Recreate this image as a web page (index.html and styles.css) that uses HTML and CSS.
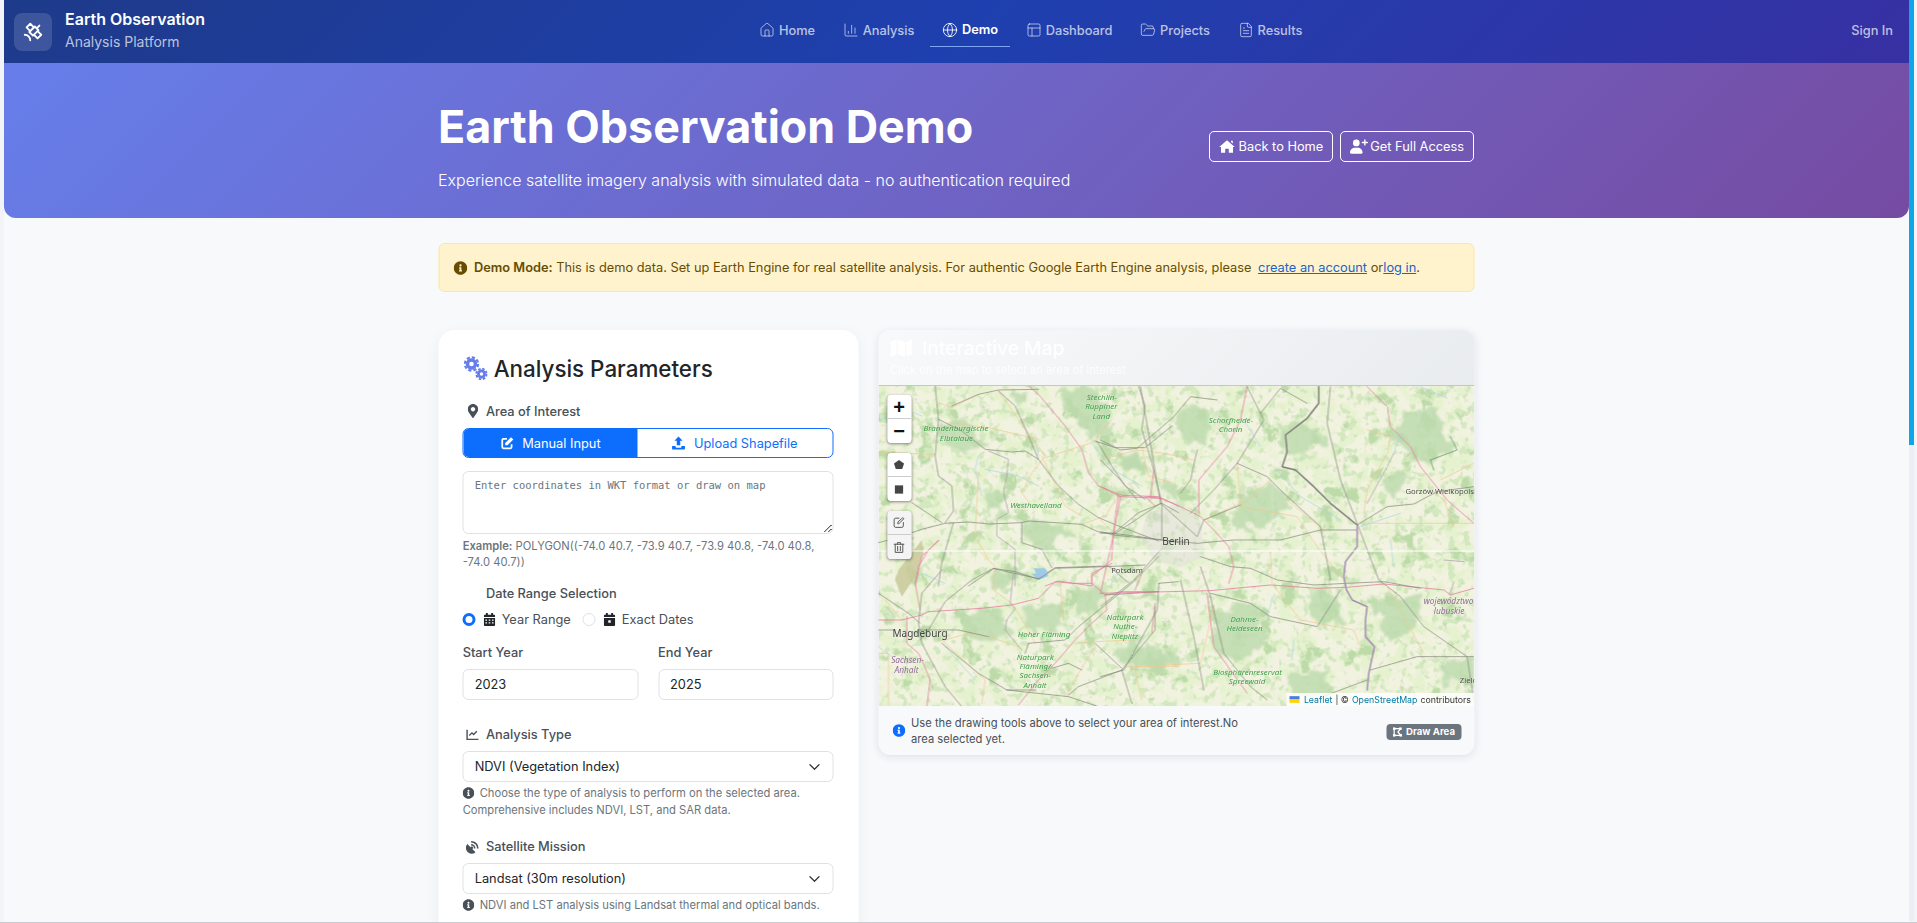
FILE: index.html
```html
<!DOCTYPE html>
<html lang="en">
<head>
<meta charset="utf-8">
<title>Earth Observation Demo</title>
<link rel="stylesheet" href="styles.css">
</head>
<body>
<svg class="defs" xmlns="http://www.w3.org/2000/svg">
  <symbol id="i-info" viewBox="0 0 512 512"><path fill="currentColor" d="M256 8C119 8 8 119.1 8 256c0 137 111 248 248 248s248-111 248-248C504 119.1 393 8 256 8zm0 110c23.2 0 42 18.8 42 42s-18.8 42-42 42-42-18.8-42-42 18.8-42 42-42zm56 254c0 6.6-5.4 12-12 12h-88c-6.6 0-12-5.4-12-12v-24c0-6.6 5.4-12 12-12h12v-64h-12c-6.6 0-12-5.4-12-12v-24c0-6.6 5.4-12 12-12h64c6.6 0 12 5.4 12 12v100h12c6.6 0 12 5.4 12 12v24z"/></symbol>
  <symbol id="i-pin" viewBox="0 0 384 512"><path fill="currentColor" d="M172.268 501.67C26.97 291.031 0 269.413 0 192 0 85.961 85.961 0 192 0s192 85.961 192 192c0 77.413-26.97 99.031-172.268 309.67-9.535 13.774-29.93 13.773-39.464 0zM192 272c44.183 0 80-35.817 80-80s-35.817-80-80-80-80 35.817-80 80 35.817 80 80 80z"/></symbol>
  <symbol id="i-home" viewBox="0 0 576 512"><path fill="currentColor" d="M288 32 568 272h-64v208H352V336H224v144H72V272H8zM432 48h64v100l-64-54z"/></symbol>
  <symbol id="i-userplus" viewBox="0 0 640 512"><circle fill="currentColor" cx="224" cy="128" r="120"/><path fill="currentColor" d="M40 512c-22 0-40-18-40-40 0-90 70-176 160-176h128c90 0 160 86 160 176 0 22-18 40-40 40zM504 200V136h-64a24 24 0 0 1 0-48h64V24a24 24 0 0 1 48 0v64h64a24 24 0 0 1 0 48h-64v64a24 24 0 0 1-48 0z"/></symbol>
  <symbol id="i-edit" viewBox="0 0 24 24"><path fill="none" stroke="currentColor" stroke-width="3" d="M19 14v5a2 2 0 0 1-2 2H5a2 2 0 0 1-2-2V7a2 2 0 0 1 2-2h6"/><path fill="currentColor" d="M8 16v-4L18 2l4 4-10 10z"/></symbol>
  <symbol id="i-upload" viewBox="0 0 24 24"><path fill="currentColor" d="M12 1l7 7h-4v8H9V8H5zM1 17h6v1.500a1.500 1.500 0 0 0 1.500 1.500h7a1.500 1.500 0 0 0 1.500-1.500V17h6v5a1 1 0 0 1-1 1H2a1 1 0 0 1-1-1z"/></symbol>
  <symbol id="i-cal" viewBox="0 0 448 512"><path fill="currentColor" d="M96 0h48a16 16 0 0 1 16 16v48h128V16a16 16 0 0 1 16-16h48a16 16 0 0 1 16 16v48h32a48 48 0 0 1 48 48v48H0v-48a48 48 0 0 1 48-48h32V16A16 16 0 0 1 96 0zM0 192h448v272a48 48 0 0 1-48 48H48a48 48 0 0 1-48-48zm64 64v48h64v-48zm128 0v48h64v-48zm128 0v48h64v-48zM64 368v48h64v-48zm128 0v48h64v-48zm128 0v48h64v-48z" fill-rule="evenodd"/></symbol>
  <symbol id="i-cal2" viewBox="0 0 448 512"><path fill="currentColor" fill-rule="evenodd" d="M96 0h48a16 16 0 0 1 16 16v48h128V16a16 16 0 0 1 16-16h48a16 16 0 0 1 16 16v48h32a48 48 0 0 1 48 48v48H0v-48a48 48 0 0 1 48-48h32V16A16 16 0 0 1 96 0zM0 192h448v272a48 48 0 0 1-48 48H48a48 48 0 0 1-48-48zm176 96v96h96v-96z"/></symbol>
  <symbol id="i-chart" viewBox="0 0 24 24"><path fill="none" stroke="currentColor" stroke-width="2.600" d="M2 3v18h21"/><path fill="none" stroke="currentColor" stroke-width="2.600" d="M6 14l5-5 3 3 6-6"/></symbol>
  <symbol id="i-dish" viewBox="0 0 24 24"><path fill="currentColor" d="M3 8 16 21a9.200 9.200 0 0 1-13-13zM9 3a12 12 0 0 1 12 12h-2.500A9.500 9.500 0 0 0 9 5.500zM9 8a7 7 0 0 1 7 7h-2.500A4.500 4.500 0 0 0 9 10.500z"/><circle fill="currentColor" cx="10" cy="14" r="2.200"/></symbol>
  <symbol id="i-draw" viewBox="0 0 24 24"><path fill="none" stroke="currentColor" stroke-width="3" d="M4 4h15l-6 8 7 8H4z"/><rect fill="currentColor" x="1" y="1" width="6" height="6"/><rect fill="currentColor" x="1" y="17" width="6" height="6"/><rect fill="currentColor" x="16" y="1" width="6" height="6"/><rect fill="currentColor" x="17" y="17" width="6" height="6"/></symbol>
  <symbol id="i-map" viewBox="0 0 576 512"><path fill="currentColor" d="M0 117v351c0 11 12 19 22 15l138-63V32L20 88C8 93 0 104 0 117zm192 303 192 64V96L192 32zM554 33 416 96v384l140-56c12-5 20-16 20-29V48c0-11-12-19-22-15z"/></symbol>
  <symbol id="l-house" viewBox="0 0 24 24"><path d="M15 21v-8a1 1 0 0 0-1-1h-4a1 1 0 0 0-1 1v8"/><path d="M3 10a2 2 0 0 1 .709-1.528l7-5.999a2 2 0 0 1 2.582 0l7 5.999A2 2 0 0 1 21 10v9a2 2 0 0 1-2 2H5a2 2 0 0 1-2-2z"/></symbol>
  <symbol id="l-chart" viewBox="0 0 24 24"><path d="M3 3v16a2 2 0 0 0 2 2h16"/><path d="M18 17V9"/><path d="M13 17V5"/><path d="M8 17v-3"/></symbol>
  <symbol id="l-globe" viewBox="0 0 24 24"><circle cx="12" cy="12" r="10"/><path d="M12 2a14.500 14.500 0 0 0 0 20 14.500 14.500 0 0 0 0-20"/><path d="M2 12h20"/></symbol>
  <symbol id="l-layout" viewBox="0 0 24 24"><rect x="3" y="3" width="18" height="18" rx="2"/><path d="M3 9h18"/><path d="M9 21V9"/></symbol>
  <symbol id="l-folder" viewBox="0 0 24 24"><path d="m6 14 1.500-2.900A2 2 0 0 1 9.240 10H20a2 2 0 0 1 1.940 2.500l-1.540 6a2 2 0 0 1-1.950 1.500H4a2 2 0 0 1-2-2V5a2 2 0 0 1 2-2h3.900a2 2 0 0 1 1.690.9l.81 1.200a2 2 0 0 0 1.670.9H18a2 2 0 0 1 2 2v2"/></symbol>
  <symbol id="l-file" viewBox="0 0 24 24"><path d="M15 2H6a2 2 0 0 0-2 2v16a2 2 0 0 0 2 2h12a2 2 0 0 0 2-2V7Z"/><path d="M14 2v4a2 2 0 0 0 2 2h4"/><path d="M10 9H8"/><path d="M16 13H8"/><path d="M16 17H8"/></symbol>
  <symbol id="l-sat" viewBox="0 0 24 24"><path d="M13 7 9 3 5 7l4 4"/><path d="m17 11 4 4-4 4-4-4"/><path d="m8 12 4 4 6-6-4-4Z"/><path d="m16 8 3-3"/><path d="M9 21a6 6 0 0 0-6-6"/></symbol>
</svg>

<div class="shell">
  <div class="page">
    <nav class="topnav">
      <a class="brand">
        <span class="logo"><svg class="lucide logo-icon"><use href="#l-sat"/></svg></span>
        <span class="brand-text"><strong>Earth Observation</strong><small>Analysis Platform</small></span>
      </a>
      <div class="navlinks">
        <a class="navlink"><svg class="lucide"><use href="#l-house"/></svg>Home</a>
        <a class="navlink"><svg class="lucide"><use href="#l-chart"/></svg>Analysis</a>
        <a class="navlink active"><svg class="lucide"><use href="#l-globe"/></svg>Demo</a>
        <a class="navlink"><svg class="lucide"><use href="#l-layout"/></svg>Dashboard</a>
        <a class="navlink"><svg class="lucide"><use href="#l-folder"/></svg>Projects</a>
        <a class="navlink"><svg class="lucide"><use href="#l-file"/></svg>Results</a>
      </div>
      <a class="signin">Sign In</a>
    </nav>

    <header class="hero">
      <div class="hero-inner">
        <div class="hero-text">
          <h1>Earth Observation Demo</h1>
          <p>Experience satellite imagery analysis with simulated data - no authentication required</p>
        </div>
        <div class="hero-actions">
          <a class="hero-btn"><svg class="fa home-ic"><use href="#i-home"/></svg>Back to Home</a>
          <a class="hero-btn"><svg class="fa user-ic"><use href="#i-userplus"/></svg>Get Full Access</a>
        </div>
      </div>
    </header>

    <main class="content">
      <div class="alert">
        <svg class="fa alert-ic"><use href="#i-info"/></svg>
        <span class="alert-text"><strong>Demo Mode:</strong> This is demo data. Set up Earth Engine for real satellite analysis. For authentic Google Earth Engine analysis, please <a class="link first">create an account</a> or<a class="link">log in</a>.</span>
      </div>

      <div class="columns">
        <section class="card">
          <h3 class="card-title">
            <svg class="gears" viewBox="0 0 24 24">
              <circle class="gear-teeth" cx="8" cy="8" r="6.600"/><circle class="gear-body" cx="8" cy="8" r="4"/>
              <circle class="gear-teeth small" cx="18" cy="18" r="5.200"/><circle class="gear-body small" cx="18" cy="18" r="3.100"/>
            </svg>
            Analysis Parameters
          </h3>

          <label class="lbl area"><span class="lbl-ic"><svg class="fa pin"><use href="#i-pin"/></svg></span>Area of Interest</label>
          <div class="tabs">
            <a class="tab on"><svg class="fa tab-ic"><use href="#i-edit"/></svg>Manual Input</a>
            <a class="tab"><svg class="fa tab-ic"><use href="#i-upload"/></svg>Upload Shapefile</a>
          </div>
          <textarea class="wkt" placeholder="Enter coordinates in WKT format or draw on map"></textarea>
          <p class="example"><strong>Example:</strong> POLYGON((-74.0 40.7, -73.9 40.7, -73.9 40.8, -74.0 40.8, -74.0 40.7))</p>

          <label class="lbl date"><span class="lbl-ic"></span>Date Range Selection</label>
          <div class="radios">
            <label class="radio"><input type="radio" name="range" checked><svg class="fa cal"><use href="#i-cal"/></svg>Year Range</label>
            <label class="radio"><input type="radio" name="range"><svg class="fa cal"><use href="#i-cal2"/></svg>Exact Dates</label>
          </div>
          <div class="years">
            <div><label class="lbl">Start Year</label><input class="field" value="2023"></div>
            <div><label class="lbl">End Year</label><input class="field" value="2025"></div>
          </div>

          <label class="lbl type"><span class="lbl-ic"><svg class="fa chart"><use href="#i-chart"/></svg></span>Analysis Type</label>
          <div class="field select">NDVI (Vegetation Index)<svg class="chev" viewBox="0 0 16 16"><path d="m2 5 6 6 6-6"/></svg></div>
          <p class="help"><svg class="fa help-ic"><use href="#i-info"/></svg>Choose the type of analysis to perform on the selected area. Comprehensive includes NDVI, LST, and SAR data.</p>

          <label class="lbl mission"><span class="lbl-ic"><svg class="fa dish"><use href="#i-dish"/></svg></span>Satellite Mission</label>
          <div class="field select">Landsat (30m resolution)<svg class="chev" viewBox="0 0 16 16"><path d="m2 5 6 6 6-6"/></svg></div>
          <p class="help"><svg class="fa help-ic"><use href="#i-info"/></svg>NDVI and LST analysis using Landsat thermal and optical bands.</p>
        </section>

        <section class="mapcard">
          <div class="map-head">
            <h4><svg class="fa map-ic"><use href="#i-map"/></svg>Interactive Map</h4>
            <p>Click on the map to select an area of interest</p>
          </div>
          <div class="map">
            <svg class="tiles" viewBox="0 0 596 320" preserveAspectRatio="none">
              <defs>
                <filter id="meadow" x="0" y="0" width="100%" height="100%" color-interpolation-filters="sRGB">
                  <feTurbulence type="fractalNoise" baseFrequency="0.06" numOctaves="3" seed="11"/>
                  <feColorMatrix values="0 0 0 0 .90  0 0 0 0 .95  0 0 0 0 .81  6 0 0 0 -2.800"/>
                </filter>
                <filter id="forest" x="0" y="0" width="100%" height="100%" color-interpolation-filters="sRGB">
                  <feTurbulence type="fractalNoise" baseFrequency="0.05" numOctaves="4" seed="5"/>
                  <feColorMatrix values="0 0 0 0 .74  0 0 0 0 .86  0 0 0 0 .66  0 8 0 0 -4.750"/>
                  <feGaussianBlur stdDeviation="0.5"/>
                </filter>
                <filter id="fine" x="0" y="0" width="100%" height="100%" color-interpolation-filters="sRGB">
                  <feTurbulence type="fractalNoise" baseFrequency="0.13" numOctaves="2" seed="23"/>
                  <feColorMatrix values="0 0 0 0 .83  0 0 0 0 .91  0 0 0 0 .75  0 0 8 0 -4.500"/>
                  <feGaussianBlur stdDeviation="0.4"/>
                </filter>
                <filter id="soft" x="0" y="0" width="100%" height="100%"><feGaussianBlur stdDeviation="0.25"/></filter>
                <filter id="softer" x="0" y="0" width="100%" height="100%" color-interpolation-filters="sRGB">
                  <feTurbulence type="fractalNoise" baseFrequency="0.07" numOctaves="3" seed="3" result="n"/>
                  <feDisplacementMap in="SourceGraphic" in2="n" scale="22" xChannelSelector="R" yChannelSelector="G"/>
                  <feGaussianBlur stdDeviation="0.9"/>
                </filter>
              </defs>
              <rect class="land" width="596" height="320"/>
              <rect filter="url(#meadow)" width="596" height="320"/>
              <rect filter="url(#forest)" width="596" height="320"/>
              <rect filter="url(#fine)" width="596" height="320"/>

              <g filter="url(#softer)">
                <g class="woods" transform="scale(.3333)">
                  <path d="M200 110 260 100 330 180 230 200 180 140Z"/>
                  <path d="M320 310 370 310 390 390 330 380Z"/>
                  <path d="M430 410 530 410 590 450 500 480 440 470Z"/>
                  <path d="M540 20 600 0 700 60 700 150 640 150 580 90Z"/>
                  <path d="M720 200 780 190 790 250 730 250Z"/>
                  <path d="M400 20 450 25 440 60 405 55Z"/>
                  <path d="M840 290 900 295 900 340 850 330Z"/>
                </g>
                <g class="woods" transform="translate(0 154) scale(.3333)">
                  <path d="M230 220 340 210 420 270 370 300 270 280Z"/>
                  <path d="M430 200 540 190 560 260 470 280Z"/>
                  <path d="M580 140 660 150 670 200 590 230Z"/>
                  <path d="M720 310 790 320 750 370 700 350Z"/>
                  <path d="M350 90 400 110 380 160 340 140Z"/>
                  <path d="M780 350 900 340 900 380 790 385Z"/>
                </g>
                <g class="woods" transform="translate(222 -6) scale(.3333)">
                  <path d="M230 100 300 60 350 110 310 200 240 180Z"/>
                  <path d="M60 230 120 220 130 270 70 270Z"/>
                  <path d="M540 130 640 130 680 190 600 230 550 200Z"/>
                  <path d="M420 350 510 310 560 390 470 450 400 430Z"/>
                  <path d="M620 640 710 640 740 730 650 740Z"/>
                  <path d="M330 690 470 680 500 780 420 850 340 800Z"/>
                  <path d="M900 90 1000 80 1060 200 980 250 880 180Z"/>
                  <path d="M820 660 960 640 950 740 860 790Z"/>
                  <path d="M1020 850 1120 830 1120 900 1030 920Z"/>
                  <path d="M70 780 200 800 190 880 90 860Z"/>
                  <path d="M840 300 930 270 880 350Z"/>
                  <path d="M560 880 680 880 690 950 560 950Z"/>
                </g>
              </g>

              <g filter="url(#soft)">
                <path class="urban" transform="translate(222 -6) scale(.3333)" d="M140 400 230 370 300 420 310 530 240 560 160 540 120 470Z"/>
                <path class="heath" transform="translate(0 154) scale(.3333)" d="M60 90 130 0 135 40 110 110 70 170 50 120Z"/>

                <g transform="scale(.3333)">
                  <path class="water" d="M300 210 290 250 310 330M320 250 420 270 480 300M470 150 480 210M640 170 700 250 790 300M130 90 60 60M0 100 100 90"/>
                  <path class="lake" d="M460 565 500 555 510 570 480 582Z"/>
                  <path class="orange" d="M180 50 220 65 300 25M210 110 330 125 480 160M360 15 420 100 500 210 460 260 430 320 460 360M300 260 290 450 330 520M490 210 560 360 610 390M700 100 640 170 500 215M790 180 810 270 880 290M720 330 680 390 610 415M0 200 170 205"/>
                  <path class="purple" d="M330 195 390 220 385 270 375 320 390 380 355 400 355 450 410 490 410 600"/>
                  <path class="pink" d="M450 0 480 25 560 120 610 190 630 260 660 300 730 328 840 332 900 360M720 330 712 380 705 442 700 520 680 540 640 570 640 600M180 465 130 510 110 600M500 600 540 585 640 600M800 332 830 360"/>
                  <path class="gray" d="M170 0 180 100 170 210 180 270 220 300 225 375 200 410M180 100 250 135 320 190 400 198 440 195 480 220 540 300 600 355 660 395 720 420 840 465M0 470 40 460 130 430 200 412 270 408 330 414 430 410 450 405 610 415 660 438 705 442 840 460 900 470M360 15 410 60 450 150 480 220M220 60 300 25 360 12 480 10M780 0 800 60 790 130 820 230 850 350 850 460M650 165 710 185 800 185 880 120M225 410 190 530 180 600M270 600 345 548 480 578 530 545 690 540 750 590M705 442 780 380 850 352 900 380M100 350 190 410M430 410 430 470 490 490 520 545M655 165 700 240 740 300 800 340"/>
                </g>

                <g transform="translate(0 154) scale(.3333)">
                  <path class="water" d="M130 100 200 130M700 130 720 100M200 320 290 420M0 320 40 350"/>
                  <path class="lake" d="M465 85 500 85 510 100 480 115Z"/>
                  <path class="orange" d="M300 30 350 80M350 90 345 150 400 190 450 270 470 310M200 300 270 280 330 290 420 320M545 130 555 240M20 180 70 240M590 310 650 305 760 300M650 320 600 400 560 470M190 300 320 420 310 490M0 340 30 340 30 500M740 380 900 380M770 390 790 480"/>
                  <path class="purple" d="M405 100 395 190 410 205 385 240 380 270 430 330"/>
                  <path class="pink" d="M0 240 70 240 130 225 150 215 310 205 400 195 480 175 530 125 580 130 640 130 680 165 685 210 640 250 590 300 530 370 480 420 420 495M125 210 110 130 120 80 150 30 180 0M85 230 85 310 120 340 130 360 155 420 145 500M640 130 640 100 700 70M680 165 730 155 840 155M830 190 820 280M770 150 790 100"/>
                  <path class="gray" d="M345 85 280 120 200 185 150 270 125 300M345 85 410 95 480 118 530 85 680 80 800 75M190 90 130 160 120 250 130 310 200 440 250 500M0 160 90 220 125 250M190 310 300 400 385 450 570 470 660 500M385 450 470 450M570 465 600 440 730 390 780 330 830 270 830 200M0 270 50 270M120 270 240 270 330 290M730 390 760 490M650 310 730 385M450 310 560 300 600 260 680 195 760 130 840 50M440 340 450 310M840 130 900 125M680 165 840 155M520 385 570 370 610 390"/>
                </g>

                <g transform="translate(222 -6) scale(.3333)">
                  <path class="water" d="M515 650 510 680 490 710M580 780 575 840M430 120 480 200M530 270 600 350 720 420M780 440 900 400M960 20 1030 50M870 480 880 560M880 220 900 160"/>
                  <path class="orange" d="M410 250 420 370 310 420M510 300 420 380 590 410 650 500 730 600M510 515 515 610 600 720M800 150 870 170 860 220 800 330 790 400M560 360 670 450M860 620 970 820M780 430 1120 430M1020 300 1120 250M600 720 760 750 780 800M100 860 300 850 340 680M980 320 1030 360 1060 440M0 240 110 210 190 220 280 240M0 420 30 450"/>
                  <path class="pink" d="M0 320 60 350 180 355 240 380 300 410 340 450 385 500 400 560 385 610M60 350 40 460 0 640M0 640 330 632 510 615 650 625 740 622 850 612 1030 630 1050 645 1120 625M440 20 420 120 380 200 295 300 295 400M800 20 860 80 870 140 930 200 960 260 1040 360 1120 430M320 640 340 800 440 940M140 350 180 355M160 270 150 350"/>
                  <path class="gray" d="M120 20 160 250 180 370M0 180 60 210 110 205 220 110 270 50 350 60M440 20 490 120 410 250 340 330 270 400M480 100 540 25 620 70M0 240 60 300 110 360M410 250 500 290 550 340 660 440 690 600M690 20 680 130 720 300 770 430 835 600 900 650 970 740 1100 830 1120 960M770 435 860 380 940 372 1010 335 1120 320M180 370 45 460 0 460M180 370 290 470 310 420 420 375M0 455 40 465 180 480 290 490 400 480 540 480 660 450 770 450M300 530 390 560 450 565 530 600 640 615 740 610 850 605 960 625M180 510 100 600 0 680M240 600 280 770 310 930M330 640 450 670 510 710 650 740 720 630M300 560 330 650 370 820 450 920 500 960M0 890 70 870 170 690 175 610M810 870 950 830 1120 830M640 960 800 900M290 210 270 300 240 340"/>
                  <path class="green-line" d="M990 240 1070 210 1050 170M1000 270 990 240"/>
                  <path class="river-gray" d="M655 20 655 70 620 115 555 165 560 215 545 260 585 270 640 320 690 370 770 435"/>
                  <path class="river-purple" d="M770 440 770 500 735 545 730 590 738 630 755 660 800 680 795 720 795 770 822 800 805 880 800 930"/>
                  <path class="purple" d="M880 220 860 260 800 370M1030 540 1090 545M1060 605 1050 640"/>
                </g>
              </g>

              <g class="labels" transform="scale(.3333)">
                <text class="park" x="625" y="41">Stechlin-</text>
                <text class="park" x="620" y="70">Ruppiner</text>
                <text class="park" x="642" y="98">Land</text>
                <text class="park" x="135" y="136">Brandenburgische</text>
                <text class="park" x="184" y="164">Elbtalaue</text>
                <text class="park" x="395" y="366">Westhavelland</text>
              </g>
              <g class="labels" transform="translate(0 154) scale(.3333)">
                <text class="city big" x="42" y="292">Magdeburg</text>
                <text class="region" x="38" y="368">Sachsen-</text>
                <text class="region" x="48" y="398">Anhalt</text>
                <text class="park" x="418" y="291">Hoher Fläming</text>
                <text class="park" x="415" y="359">Naturpark</text>
                <text class="park" x="423" y="387">Fläming/</text>
                <text class="park" x="423" y="415">Sachsen-</text>
                <text class="park" x="435" y="443">Anhalt</text>
              </g>
              <g class="labels" transform="translate(222 -6) scale(.3333)">
                <text class="park" x="325" y="129">Schorfheide-</text>
                <text class="park" x="355" y="157">Chorin</text>
                <text class="city big" x="185" y="495">Berlin</text>
                <text class="city" x="32" y="578">Potsdam</text>
                <text class="city" x="915" y="342">Gorzów Wielkopolski</text>
                <text class="region" x="970" y="673">województwo</text>
                <text class="region" x="1000" y="703">lubuskie</text>
                <text class="park" x="18" y="719">Naturpark</text>
                <text class="park" x="38" y="747">Nuthe-</text>
                <text class="park" x="33" y="776">Nieplitz</text>
                <text class="park" x="390" y="727">Dahme-</text>
                <text class="park" x="378" y="754">Heideseen</text>
                <text class="park" x="338" y="884">Biosphärenreservat</text>
                <text class="park" x="385" y="913">Spreewald</text>
                <text class="city" x="1078" y="908">Zielona</text>
              </g>
              <path class="seam" d="M0 165H596"/>
              <path class="seam faint" d="M394 0V320"/>
            </svg>

            <div class="ctrl-stack">
              <div class="ctrl">
                <a class="ctrl-btn zoom">+</a>
                <a class="ctrl-btn zoom">−</a>
              </div>
              <div class="ctrl">
                <a class="ctrl-btn"><svg class="ctrl-ic" viewBox="0 0 24 24"><path d="M12 2 23 10 19 22H5L1 10Z"/></svg></a>
                <a class="ctrl-btn"><svg class="ctrl-ic" viewBox="0 0 24 24"><rect x="3" y="3" width="18" height="18"/></svg></a>
              </div>
              <div class="ctrl off">
                <a class="ctrl-btn"><svg class="ctrl-line" viewBox="0 0 24 24"><path d="M12 4H6a3 3 0 0 0-3 3v11a3 3 0 0 0 3 3h11a3 3 0 0 0 3-3v-6"/><path d="M10 14v-3l9-8 2 2-9 9z"/></svg></a>
                <a class="ctrl-btn"><svg class="ctrl-line" viewBox="0 0 24 24"><path d="M3 6h18M9 6V3h6v3M5 6v15h14V6M9.500 10v8M14.500 10v8"/></svg></a>
              </div>
            </div>
            <div class="attrib"><svg class="flag" viewBox="0 0 12 8"><rect width="12" height="4" fill="#4C7BE1"/><rect y="4" width="12" height="4" fill="#FFD500"/></svg><a>Leaflet</a> | © <a>OpenStreetMap</a> contributors</div>
          </div>
          <div class="map-foot">
            <svg class="fa foot-ic"><use href="#i-info"/></svg>
            <p>Use the drawing tools above to select your area of interest.No area selected yet.</p>
            <span class="badge"><svg class="fa badge-ic"><use href="#i-draw"/></svg>Draw Area</span>
          </div>
        </section>
      </div>
    </main>
  </div>
  <div class="scrollbar"><div class="thumb"></div></div>
</div>
</body>
</html>
```

FILE: styles.css
```css
* { box-sizing: border-box; }
html, body { margin: 0; padding: 0; height: 100%; overflow: hidden; }
body { font-family: Inter, "Liberation Sans", sans-serif; font-size: 12.800px; color: #212529; background: #f8f9fb; }
.defs { display: none; }
a { text-decoration: none; }
p, h1, h3, h4 { margin: 0; }

.shell { display: flex; width: 1917px; height: 923px; padding: 0 3px 1px 4px; background: #f3f4f7; border-bottom: 1px solid #c9cbcf; }
.page { width: 1905px; height: 922px; overflow: hidden; background: #f8f9fb; }
.scrollbar { width: 5px; height: 100%; background: #eceef4; }
.thumb { height: 445px; background: #0ea5e9; }

.fa { display: inline-block; flex: none; }
.lucide { width: 16px; height: 16px; flex: none; fill: none; stroke: currentColor; stroke-width: 1.300; stroke-linecap: round; stroke-linejoin: round; }

/* top navigation */
.topnav { display: flex; align-items: center; justify-content: space-between; height: 63px; padding: 0 16px 0 10px; background: linear-gradient(135deg, #1e3a8a 0%, #1e40af 50%, #3730a3 100%); color: #fff; }
.brand { display: flex; align-items: center; gap: 13px; color: #fff; }
.logo { display: flex; align-items: center; justify-content: center; width: 38px; height: 38px; border-radius: 8px; background: rgba(255,255,255,.14); }
.logo-icon { width: 22px; height: 22px; stroke-width: 2; }
.brand-text { display: flex; flex-direction: column; gap: 4px; margin-top: -3px; }
.brand-text strong { font-size: 16px; font-weight: 600; line-height: 19px; }
.brand-text small { font-size: 14px; line-height: 17px; color: rgba(255,255,255,.7); }
.navlinks { display: flex; gap: 3px; height: 63px; align-items: center; margin-left: 5px; }
.navlink { display: flex; align-items: center; gap: 4px; height: 34px; padding: 0 12.300px; font-weight: 500; font-size: 12.800px; color: rgba(255,255,255,.7); margin-top: -3px; }
.navlink.active { color: #fff; font-weight: 600; border-bottom: 1px solid #7ea6f2; }
.signin { font-size: 12.800px; font-weight: 500; color: rgba(255,255,255,.7); margin-top: -3px; }

/* hero */
.hero { height: 155px; background: linear-gradient(135deg, #667eea 0%, #764ba2 100%); border-radius: 0 0 12px 12px; color: #fff; display: flex; justify-content: center; }
.hero-inner { width: 1036px; margin-left: -1px; display: flex; align-items: flex-start; justify-content: space-between; }
.hero-text { margin-top: 37px; }
.hero h1 { font-size: 44.800px; font-weight: 700; line-height: 54px; }
.hero p { font-size: 16px; font-weight: 300; line-height: 24px; margin-top: 14px; color: #fff; }
.hero-actions { display: flex; gap: 7px; margin-top: 68px; }
.hero-btn { display: flex; align-items: center; height: 31px; padding: 0 9px; border: 1px solid #fff; border-radius: 5px; color: #fff; font-size: 12.800px; }
.home-ic { width: 16px; height: 15px; margin-right: 4px; color: #fff; }
.user-ic { width: 18px; height: 15px; margin-right: 2px; color: #fff; }

/* content */
.content { width: 1036px; margin: 0 auto; padding-top: 25px; transform: translateX(-.5px); }
.alert { display: flex; align-items: center; height: 49px; padding: 0 14px; background: #fff3cd; border: 1px solid #ffe69c; border-radius: 6px; color: #664d03; font-size: 12.800px; }
.alert-ic { width: 14px; height: 14px; margin-right: 7px; }
.alert-text strong { font-weight: 600; }
.link { color: #1b64c9; text-decoration: underline; }
.link.first { margin-left: 3px; }
.columns { display: grid; grid-template-columns: 420px 596px; gap: 20px; margin-top: 38px; align-items: start; }

/* form card */
.card { background: #fff; border-radius: 16px; padding: 24px 24.670px 0; box-shadow: 0 4px 16px rgba(20,30,60,.05); height: 640px; }
.card-title { display: flex; align-items: center; gap: 6px; font-size: 22.400px; font-weight: 500; line-height: 30px; color: #212529; margin-left: 1px; }
.gears { width: 24px; height: 24px; margin-top: -3px; flex: none; }
.gear-teeth { fill: none; stroke: #667eea; stroke-width: 2.200; stroke-dasharray: 3.200 2; }
.gear-teeth.small { stroke-dasharray: 2.500 1.600; stroke-width: 2; }
.gear-body { fill: none; stroke: #667eea; stroke-width: 3.400; }
.gear-body.small { stroke-width: 2.800; }
.lbl { display: flex; align-items: center; font-size: 12.800px; font-weight: 500; line-height: 21px; color: #495057; }
.lbl-ic { display: flex; align-items: center; justify-content: center; width: 23.300px; height: 16px; flex: none; }
.lbl.area { margin-top: 16.500px; }
.pin { width: 11px; height: 14px; margin-right: 3px; color: #495057; }
.chart { width: 14px; height: 13px; margin-right: 3px; color: #495057; }
.dish { width: 15px; height: 15px; margin-right: 3px; color: #495057; }
.tabs { display: flex; height: 30px; margin-top: 6.500px; border: 1px solid #0d6efd; border-radius: 6px; overflow: hidden; }
.tab { flex: 1; display: flex; align-items: center; justify-content: center; color: #0d6efd; font-size: 12.800px; }
.tab.on { flex: 0 0 173.500px; background: #0d6efd; color: #fff; }
.tab-ic { width: 14px; height: 14px; margin-right: 8px; }
.wkt { display: block; width: 100%; height: 63px; margin-top: 13px; padding: 5px 11px; border: 1px solid #dee2e6; border-radius: 6px; font-family: "DejaVu Sans Mono", monospace; font-size: 10.500px; line-height: 16px; background: #fff; outline: none; }
.wkt::placeholder { color: #6c757d; opacity: 1; }
.example { margin-top: 4px; font-size: 11.200px; line-height: 16px; color: #6c757d; }
.example strong { font-weight: 600; }
.lbl.date { margin-top: 12.500px; }
.radios { display: flex; gap: 12px; margin-top: 5px; }
.radio { display: flex; align-items: center; line-height: 21px; font-size: 12.800px; color: #495057; }
.radio input { appearance: none; width: 13px; height: 13px; margin: 0 8px 0 0; border: 1px solid #dee2e6; border-radius: 50%; background: #fff; }
.radio input:checked { border: 3.500px solid #0d6efd; }
.cal { width: 12px; height: 13px; margin-right: 6px; color: #212529; }
.years { display: grid; grid-template-columns: 1fr 1fr; gap: 20px; margin-top: 12px; }
.field { display: block; width: 100%; height: 31px; margin-top: 6.500px; padding: 0 11px; border: 1px solid #dee2e6; border-radius: 6px; font-family: inherit; font-size: 12.800px; color: #212529; background: #fff; outline: none; }
.lbl.type { margin-top: 23.500px; }
.select { display: flex; align-items: center; justify-content: space-between; }
.chev { width: 12px; height: 12px; margin-right: 1px; fill: none; stroke: #343a40; stroke-width: 1.700; stroke-linecap: round; stroke-linejoin: round; }
.help { margin-top: 2.500px; font-size: 11.200px; line-height: 17px; color: #6c757d; }
.help-ic { width: 12px; height: 12px; margin-right: 5px; vertical-align: -2px; color: #495057; }
.lbl.mission { margin-top: 17px; }

/* map card */
.mapcard { background: #f8f9fa; border-radius: 12px; overflow: hidden; box-shadow: 0 2px 8px rgba(20,30,60,.1); }
.map-head { height: 56px; padding: 6px 12px 0; background: linear-gradient(135deg, #f8f9fa 0%, #e9ecef 100%); border-bottom: 1px solid #c4c6c9; color: #fff; }
.map-head h4 { display: flex; align-items: center; gap: 10px; font-size: 19.200px; font-weight: 500; line-height: 24px; }
.map-ic { width: 22px; height: 20px; color: #fff; }
.map-head p { font-size: 11.200px; line-height: 16px; margin-top: 2px; opacity: .8; }
.map { position: relative; height: 320px; overflow: hidden; }
.tiles { display: block; width: 596px; height: 320px; }
.land { fill: #f1f2df; }
.woods path { fill: #bcdaac; opacity: .8; }
.heath { fill: #c9c99a; opacity: .85; }
.water, .orange, .pink, .gray, .purple, .river-gray, .river-purple, .green-line { fill: none; stroke-linejoin: round; stroke-linecap: round; }
.water { stroke: #a9d3e8; stroke-width: 2; }
.lake { fill: #9ecae6; }
.orange { stroke: #f3c68e; stroke-width: 2; }
.pink { stroke: #e87a9e; stroke-width: 2.300; }
.gray { stroke: #80807a; stroke-width: 2; }
.purple { stroke: #a596a8; stroke-width: 2; }
.river-gray { stroke: #7e7e78; stroke-width: 4.500; }
.river-purple { stroke: #a48bb4; stroke-width: 4.500; }
.green-line { stroke: #6a9c6a; stroke-width: 2.500; }
.urban { fill: #dcd9d9; opacity: .4; }
.labels text { font-family: "Noto Sans", "Open Sans", sans-serif; paint-order: stroke; stroke: rgba(255,255,255,.3); stroke-width: 2px; }
.park { font-size: 24px; font-style: italic; fill: #3d9b45; }
.region { font-size: 25px; font-style: italic; fill: #93689a; }
.city { font-size: 23px; fill: #4c4c4c; }
.city.big { font-size: 30px; fill: #3f3f3f; }
.seam { stroke: #fff; stroke-width: 1; fill: none; }
.seam.faint { opacity: .2; }

.ctrl-stack { position: absolute; left: 9px; top: 9px; display: flex; flex-direction: column; gap: 10px; }
.ctrl { border-radius: 4px; overflow: hidden; box-shadow: 0 1px 3px rgba(0,0,0,.45); background: #fff; }
.ctrl-btn { display: flex; align-items: center; justify-content: center; width: 24px; height: 24px; background: #fff; border-bottom: 1px solid #ccc; color: #111; }
.ctrl-btn:last-child { border-bottom: none; }
.ctrl.off .ctrl-btn { background: #f4f4f4; }
.zoom { font: 700 20px/24px "Liberation Sans", sans-serif; }
.ctrl-ic { width: 11px; height: 11px; fill: #464646; }
.ctrl-line { width: 13px; height: 13px; fill: none; stroke: #555; stroke-width: 1.800; stroke-linejoin: round; stroke-linecap: round; }
.attrib { position: absolute; right: 0; bottom: 0; display: flex; align-items: center; gap: 3px; height: 13px; padding: 0 3px; background: rgba(255,255,255,.85); font-size: 8.800px; color: #333; white-space: nowrap; }
.attrib a { color: #0078a8; }
.flag { width: 10px; height: 7px; margin-right: 1px; }

.map-foot { display: flex; align-items: center; height: 49px; padding: 0 13px 0 14px; }
.foot-ic { width: 13px; height: 13px; margin-right: 6px; color: #0d6efd; }
.map-foot p { width: 335px; font-size: 11.200px; line-height: 16px; color: #495057; }
.badge { display: flex; align-items: center; height: 16px; margin: 2px 0 0 auto; padding: 0 6px; background: #6c757d; color: #fff; border-radius: 4px; font-size: 9.600px; font-weight: 700; }
.badge-ic { width: 10px; height: 10px; margin-right: 4px; }
```
